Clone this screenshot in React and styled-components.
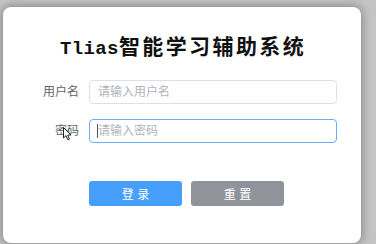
import React from "react";
import styled, { createGlobalStyle, css } from "styled-components";

const GlobalStyle = createGlobalStyle`
   html, body {
      margin: 0;
      background: #c4c4c4;
      font-family: "Liberation Sans", "Noto Sans CJK SC", sans-serif;
   }
`;

const Page = styled.main`
   box-sizing: border-box;
   height: 244px;
   padding: 7px 15px 1px 3px;
`;

const Card = styled.section`
   position: relative;
   box-sizing: border-box;
   width: 358px;
   height: 236px;
   padding-top: 23px;
   background: #fff;
   border-radius: 8px;
   box-shadow: 0 0 9px 2px rgba(0, 0, 0, 0.28);
`;

const Title = styled.h1`
   height: 30px;
   margin: 0;
   padding-left: 2px;
   text-align: center;
   font-family: "Noto Sans CJK SC", sans-serif;
   font-size: 21px;
   line-height: 30px;
   font-weight: 700;
   letter-spacing: 2.4px;
   color: #111;
   overflow: hidden;
`;

const Latin = styled.span`
   font-family: "Liberation Mono", monospace;
   font-size: 19px;
   line-height: 1;
   letter-spacing: 0.4px;
`;

const Form = styled.form`
   display: flex;
   flex-direction: column;
   gap: 15px;
   margin-top: 20px;
`;

const Row = styled.div`
   display: grid;
   grid-template-columns: 86px 248px;
   align-items: center;
   height: 24px;
`;

const Label = styled.label`
   padding-right: 10px;
   text-align: right;
   font-size: 12px;
   line-height: 24px;
   color: #606266;
`;

const Field = styled.div`
   position: relative;
   height: 24px;
`;

const Input = styled.input`
   display: block;
   box-sizing: border-box;
   width: 100%;
   height: 24px;
   padding: 0 8px;
   border: 1px solid #dcdfe6;
   border-radius: 4px;
   outline: none;
   font-family: "Liberation Sans", "Noto Sans CJK SC", sans-serif;
   font-size: 12px;
   color: #606266;

   &::placeholder {
      color: #b0b3b9;
   }

   ${({ $focused }) =>
      $focused &&
      css`
         border-color: #6aaef0;
      `}
`;

const Caret = styled.span`
   position: absolute;
   left: 8px;
   top: 5px;
   width: 1px;
   height: 14px;
   background: #555;
`;

const Actions = styled.div`
   display: flex;
   gap: 9px;
   margin-top: 38px;
   padding-left: 86px;
`;

const Button = styled.button`
   width: 93px;
   height: 25px;
   padding: 0;
   border: none;
   border-radius: 3px;
   font-family: "Liberation Sans", "Noto Sans CJK SC", sans-serif;
   font-size: 12px;
   color: #fff;
   background: ${({ $variant }) => ($variant === "primary" ? "#46a0fb" : "#909399")};
`;

const Pointer = styled.svg`
   position: absolute;
   left: 60px;
   top: 120px;
`;

export default function App() {
   return (
      <>
         <GlobalStyle />
         <Page>
            <Card>
               <Title>
                  <Latin>Tlias</Latin>智能学习辅助系统
               </Title>
               <Form onSubmit={(e) => e.preventDefault()}>
                  <Row>
                     <Label>用户名</Label>
                     <Field>
                        <Input placeholder="请输入用户名" />
                     </Field>
                  </Row>
                  <Row>
                     <Label>密码</Label>
                     <Field>
                        <Input type="password" placeholder="请输入密码" $focused />
                        <Caret />
                     </Field>
                  </Row>
               </Form>
               <Actions>
                  <Button $variant="primary">登 录</Button>
                  <Button>重 置</Button>
               </Actions>
               <Pointer width="9" height="14" viewBox="0 0 9 14">
                  <path d="M0.5 0.5 L0.5 11 L3 8.6 L4.8 12.8 L6.4 12.1 L4.7 8 L8 8 Z" fill="#fff" stroke="#222" strokeWidth="1" strokeLinejoin="round" />
               </Pointer>
            </Card>
         </Page>
      </>
   );
}
